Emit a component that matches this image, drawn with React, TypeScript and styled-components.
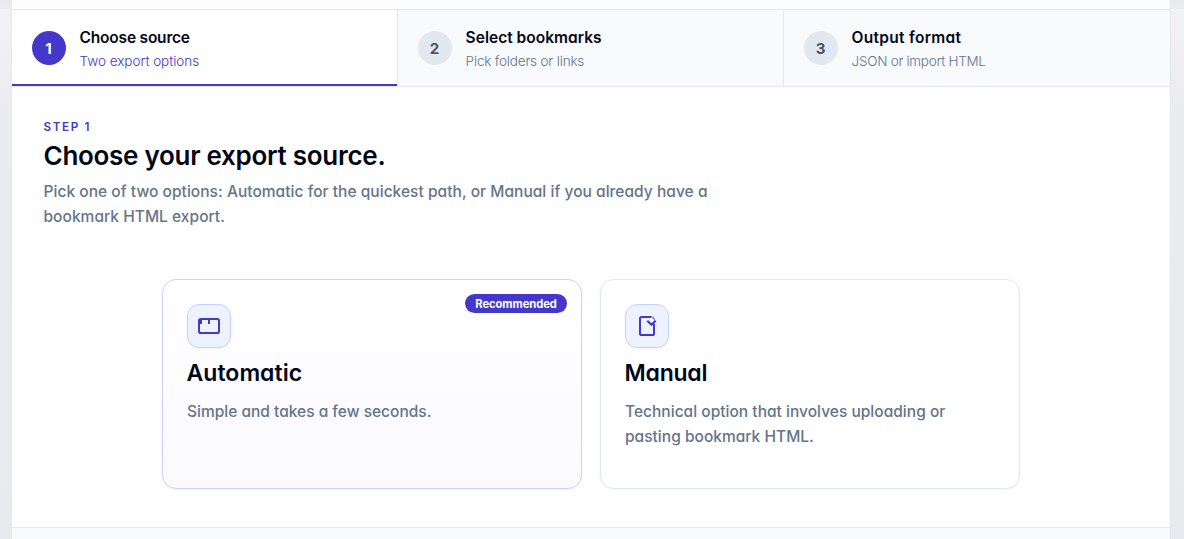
import React from "react";
import styled, { createGlobalStyle } from "styled-components";

const GlobalStyle = createGlobalStyle`
  *, *::before, *::after { box-sizing: border-box; }
  body {
    margin: 0;
    background: #f0f0f2;
    color: #020617;
    font-family: Inter, "Liberation Sans", sans-serif;
    font-feature-settings: "cv11" 1;
    overflow: hidden;
  }
  h1, h2, p { margin: 0; }
`;

const Page = styled.div`
  height: 539px;
  padding: 0 13px 0 11px;
  background:
    linear-gradient(#e9e9eb, #ececee) 0 0 / 100% 9px no-repeat,
    linear-gradient(#f2f2f4 9px, #ebecef 110px, #e9eaee 539px);
`;

const Panel = styled.main`
  display: flex;
  flex-direction: column;
  height: 100%;
  border: solid #e2e8f0;
  border-width: 0 1px;
  background: #fff;
`;

const TopEdge = styled.div`
  flex: none;
  height: 10px;
  background: #fdfdfd;
  border-bottom: 1px solid #e2e8f0;
`;

const Steps = styled.nav`
  flex: none;
  display: grid;
  grid-template-columns: 386px 386px 1fr;
  height: 77px;
  border-bottom: 1px solid #e2e8f0;
`;

const Step = styled.div<{ $active?: boolean }>`
  display: flex;
  align-items: center;
  gap: 13.6px;
  padding: 0 20px;
  background: ${(p) => (p.$active ? "#fff" : "#f8fafc")};
  border-right: 1px solid #e2e8f0;
  box-shadow: ${(p) => (p.$active ? "inset 0 -2px #4338ca" : "none")};
  &:last-child { border-right: 0; }
`;

const StepNumber = styled.span<{ $active?: boolean }>`
  display: grid;
  place-items: center;
  width: 34px;
  height: 34px;
  padding-right: 1px;
  border-radius: 50%;
  font-size: 15px;
  font-weight: 700;
  color: ${(p) => (p.$active ? "#fff" : "#475569")};
  background: ${(p) => (p.$active ? "#4338ca" : "#e2e8f0")};
`;

const StepTitle = styled.div<{ $track: number }>`
  padding-top: 1px;
  font-size: 15.5px;
  line-height: 24px;
  font-weight: 600;
  letter-spacing: ${(p) => p.$track}px;
`;

const StepHint = styled.div<{ $active?: boolean; $track: number }>`
  font-size: 13.5px;
  line-height: 22px;
  font-weight: 300;
  letter-spacing: ${(p) => p.$track}px;
  color: ${(p) => (p.$active ? "#4338ca" : "#64748b")};
`;

const Content = styled.section`
  flex: 1;
  padding: 32px 31px 0 31.5px;
`;

const Eyebrow = styled.p`
  font-size: 11.7px;
  line-height: 17px;
  font-weight: 600;
  letter-spacing: 1.6px;
  color: #4338ca;
`;

const Heading = styled.h1`
  margin-top: 3px;
  font-size: 26px;
  line-height: 34px;
  font-weight: 600;
  letter-spacing: -0.28px;
`;

const Copy = styled.p<{ $track: number }>`
  font-size: 15.5px;
  line-height: 25px;
  font-weight: 500;
  letter-spacing: ${(p) => p.$track}px;
  color: #64748b;
`;

const Intro = styled.div`
  margin-top: 6px;
`;

const Options = styled.div`
  display: grid;
  grid-template-columns: 420px 420px;
  gap: 18px;
  margin: 50px 0 0 118.5px;
`;

const Card = styled.article<{ $recommended?: boolean }>`
  position: relative;
  height: 210px;
  padding: 24px;
  border: 1px solid ${(p) => (p.$recommended ? "#c7d2fe" : "#e2e8f0")};
  border-radius: 14px;
  background: ${(p) => (p.$recommended ? "linear-gradient(#fff, #faf9ff)" : "#fff")};
  box-shadow: 0 1px 3px rgba(15, 23, 42, 0.05);
`;

const Badge = styled.span`
  position: absolute;
  top: 14px;
  right: 14px;
  width: 102px;
  height: 19px;
  padding-top: 1px;
  border-radius: 10px;
  text-align: center;
  font-size: 11.2px;
  line-height: 19px;
  font-weight: 700;
  letter-spacing: -0.06px;
  color: #fff;
  background: #4338ca;
`;

const IconTile = styled.div`
  display: grid;
  place-items: center;
  width: 44px;
  height: 44px;
  border: 1px solid #c7d2fe;
  border-radius: 12px;
  background: #eef2ff;
  box-shadow: 0 1px 3px rgba(15, 23, 42, 0.05);
`;

const CardTitle = styled.h2<{ $track: number }>`
  margin: 10px 0 11px -0.5px;
  font-size: 23px;
  line-height: 30px;
  font-weight: 600;
  letter-spacing: ${(p) => p.$track}px;
`;

const Footer = styled.footer`
  flex: none;
  height: 12px;
  border-top: 1px solid #e2e8f0;
  background: #f8fafc;
`;

const WindowIcon = () => (
  <svg width="28" height="28" viewBox="0 0 28 28" fill="none" stroke="#4338ca" strokeWidth="2">
    <rect x="4" y="7" width="20" height="14" rx="1.8" />
    <path d="M6 7v5M14 7v5" />
  </svg>
);

const DocumentIcon = () => (
  <svg width="28" height="28" viewBox="0 0 28 28" fill="none" stroke="#4338ca" strokeWidth="2">
    <path d="M18 5H8.6Q7 5 7 6.600V21.400Q7 23 8.600 23H19.400Q21 23 21 21.400V12" />
    <path d="M14.300 8.700 18.500 12.700 22.700 8.700" strokeWidth="2.200" />
    <path d="M18 4.600Q21.500 4.600 21.500 8.500" strokeWidth="0.900" />
  </svg>
);

const steps = [
  { title: "Choose source", hint: "Two export options", track: -0.2, hintTrack: -0.04 },
  { title: "Select bookmarks", hint: "Pick folders or links", track: 0.02, hintTrack: -0.17 },
  { title: "Output format", hint: "JSON or import HTML", track: 0.29, hintTrack: -0.28 },
];

export default function App() {
  return (
    <>
      <GlobalStyle />
      <Page>
        <Panel>
          <TopEdge />
          <Steps>
            {steps.map((s, i) => (
              <Step key={s.title} $active={i === 0}>
                <StepNumber $active={i === 0}>{i + 1}</StepNumber>
                <div>
                  <StepTitle $track={s.track}>{s.title}</StepTitle>
                  <StepHint $active={i === 0} $track={s.hintTrack}>{s.hint}</StepHint>
                </div>
              </Step>
            ))}
          </Steps>
          <Content>
            <Eyebrow>STEP 1</Eyebrow>
            <Heading>Choose your export source.</Heading>
            <Intro>
              <Copy $track={0.035}>
                Pick one of two options: Automatic for the quickest path, or Manual if you already have a
                <br />
                bookmark HTML export.
              </Copy>
            </Intro>
            <Options>
              <Card $recommended>
                <Badge>Recommended</Badge>
                <IconTile><WindowIcon /></IconTile>
                <CardTitle $track={0.04}>Automatic</CardTitle>
                <Copy $track={0}>Simple and takes a few seconds.</Copy>
              </Card>
              <Card>
                <IconTile><DocumentIcon /></IconTile>
                <CardTitle $track={-0.22}>Manual</CardTitle>
                <Copy $track={0.02}>
                  Technical option that involves uploading or
                  <br />
                  pasting bookmark HTML.
                </Copy>
              </Card>
            </Options>
          </Content>
          <Footer />
        </Panel>
      </Page>
    </>
  );
}
